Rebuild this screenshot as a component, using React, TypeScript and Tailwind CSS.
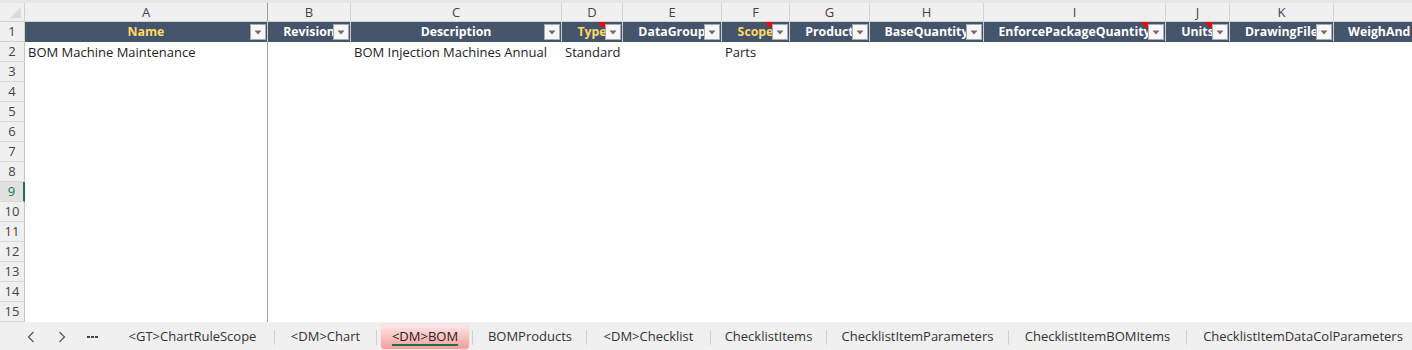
import React from "react";

type Col = {
  letter: string;
  width: string;
  title: string;
  accent?: boolean;
  comment?: boolean;
  filter?: boolean;
  value?: string;
};

const columns: Col[] = [
  { letter: "A", width: "w-[243px]", title: "Name", accent: true, filter: true, value: "BOM Machine Maintenance" },
  { letter: "B", width: "w-[83px]", title: "Revision", filter: true },
  { letter: "C", width: "w-[211px]", title: "Description", filter: true, value: "BOM Injection Machines Annual" },
  { letter: "D", width: "w-[61px]", title: "Type", accent: true, comment: true, filter: true, value: "Standard" },
  { letter: "E", width: "w-[99px]", title: "DataGroup", filter: true },
  { letter: "F", width: "w-[68px]", title: "Scope", accent: true, comment: true, filter: true, value: "Parts" },
  { letter: "G", width: "w-[80px]", title: "Product", filter: true },
  { letter: "H", width: "w-[114px]", title: "BaseQuantity", filter: true },
  { letter: "I", width: "w-[182px]", title: "EnforcePackageQuantity", comment: true, filter: true },
  { letter: "J", width: "w-[64px]", title: "Units", comment: true, filter: true },
  { letter: "K", width: "w-[104px]", title: "DrawingFile", filter: true },
];

const tabs = [
  { name: "<GT>ChartRuleScope", width: "w-[163px]" },
  { name: "<DM>Chart", width: "w-[101px]" },
  { name: "<DM>BOM", width: "w-[88px]", active: true },
  { name: "BOMProducts", width: "w-[112px]" },
  { name: "<DM>Checklist", width: "w-[123px]" },
  { name: "ChecklistItems", width: "w-[115px]" },
  { name: "ChecklistItemParameters", width: "w-[181px]" },
  { name: "ChecklistItemBOMItems", width: "w-[177px]" },
  { name: "ChecklistItemDataColParameters", width: "w-[232px]" },
];

const rows = Array.from({ length: 14 }, (_, i) => i + 2);

function FilterButton() {
  return (
    <div className="absolute right-[1px] top-[2px] w-[16px] h-[16px] bg-[#f7f7f7] border border-[#a9a9a9] flex items-center justify-center">
      <svg width="8" height="5" viewBox="0 0 8 5">
        <path d="M0.5 0.5 L7.5 0.5 L4 4.5 Z" fill="#6b6b6b" />
      </svg>
    </div>
  );
}

export default function App() {
  return (
    <div className="w-[1412px] h-[350px] overflow-hidden bg-white flex flex-col font-['Open_Sans',sans-serif] text-[13px] text-[#222]">
      <div className="h-[3px] shrink-0 bg-[#e6e6e6]" />

      {/* column letters */}
      <div className="flex h-[19px] shrink-0 bg-[#f0f0f0] border-b border-[#d0d0d0]">
        <div className="w-[25px] shrink-0 border-r border-[#d0d0d0] relative">
          <div className="absolute right-[3px] bottom-[3px] w-0 h-0 border-b-[11px] border-b-[#dcdcdc] border-l-[11px] border-l-transparent" />
        </div>
        {columns.map((c) => (
          <div
            key={c.letter}
            className={`${c.width} shrink-0 flex items-center justify-center text-[#444] leading-none border-r ${
              c.letter === "A" ? "border-[#9e9e9e]" : "border-[#d4d4d4]"
            }`}
          >
            {c.letter}
          </div>
        ))}
        <div className="flex-1" />
      </div>

      {/* row 1: table header */}
      <div className="flex h-[20px] shrink-0">
        <div className="w-[25px] shrink-0 bg-[#f0f0f0] border-r border-b border-[#d0d0d0] flex items-center justify-center text-[#444]">
          1
        </div>
        {columns.map((c) => (
          <div
            key={c.letter}
            className={`${c.width} shrink-0 relative overflow-hidden bg-[#44546a] border-r border-[#c9ced6] flex items-center justify-center pt-[1px] text-[12.3px] font-bold whitespace-nowrap ${
              c.accent ? "text-[#ffd966]" : "text-white"
            }`}
          >
            {c.title}
            {c.comment && (
              <div className="absolute top-0 right-[17px] w-0 h-0 border-t-[7px] border-t-[#ff0000] border-l-[7px] border-l-transparent" />
            )}
            {c.filter && <FilterButton />}
          </div>
        ))}
        {/* column L runs past the window edge */}
        <div className="flex-1 bg-[#44546a] flex items-center pl-[14px] pt-[1px] text-[12.3px] font-bold text-white whitespace-nowrap overflow-hidden">
          WeighAnd
        </div>
      </div>

      {/* data rows */}
      {rows.map((r) => {
        const selected = r === 9;
        return (
          <div key={r} className="flex h-[20px] shrink-0">
            <div
              className={`w-[25px] shrink-0 border-b border-[#d8d8d8] flex items-center justify-center pt-[1px] ${
                selected
                  ? "bg-[#e1e1e1] text-[#107c41] border-r-2 border-r-[#217346]"
                  : "bg-[#f0f0f0] text-[#444] border-r border-r-[#c6c6c6]"
              }`}
            >
              {r}
            </div>
            {columns.map((c) => (
              <div
                key={c.letter}
                className={`${c.width} shrink-0 flex items-center px-[3px] pt-[2px] whitespace-nowrap overflow-visible ${
                  c.letter === "A" ? "border-r border-[#a6a6a6]" : ""
                }`}
              >
                {r === 2 ? c.value : null}
              </div>
            ))}
          </div>
        );
      })}

      {/* sheet tabs */}
      <div className="h-[28px] shrink-0 bg-[#f0f0f0] flex items-center pt-[2px] text-[13px] text-[#333]">
        <div className="w-[111px] shrink-0 flex items-center">
          <div className="w-[27px]" />
          <svg width="8" height="12" viewBox="0 0 8 12">
            <path d="M6.5 1 L1.5 6 L6.5 11" fill="none" stroke="#555" strokeWidth="1.2" />
          </svg>
          <div className="w-[23px]" />
          <svg width="8" height="12" viewBox="0 0 8 12">
            <path d="M1.5 1 L6.5 6 L1.5 11" fill="none" stroke="#555" strokeWidth="1.2" />
          </svg>
          <div className="ml-[21px] flex gap-[1.5px]">
            <span className="w-[2.5px] h-[2.5px] bg-[#444]" />
            <span className="w-[2.5px] h-[2.5px] bg-[#444]" />
            <span className="w-[2.5px] h-[2.5px] bg-[#444]" />
          </div>
        </div>
        {tabs.map((t, i) => (
          <React.Fragment key={t.name}>
            {t.active ? (
              <div
                className={`${t.width} shrink-0 h-[25px] mx-[4px] -mt-[1px] rounded-[4px] bg-gradient-to-b from-[#fdeaea] to-[#f39c9c] shadow-[0_0_1px_rgba(0,0,0,0.3)] flex flex-col items-center justify-center`}
              >
                <span className="leading-[16px] border-b-2 border-[#1e7145] text-[#222]">{t.name}</span>
              </div>
            ) : (
              <div className={`${t.width} shrink-0 flex items-center justify-center whitespace-nowrap`}>
                {t.name}
              </div>
            )}
            {i < tabs.length - 1 && !t.active && (
              <div className="w-px h-[15px] shrink-0 bg-[#d0d0d0]" />
            )}
            {t.active && <div className="w-px h-[15px] shrink-0 bg-[#d0d0d0] -ml-[1px] mr-[1px]" />}
          </React.Fragment>
        ))}
      </div>
    </div>
  );
}
